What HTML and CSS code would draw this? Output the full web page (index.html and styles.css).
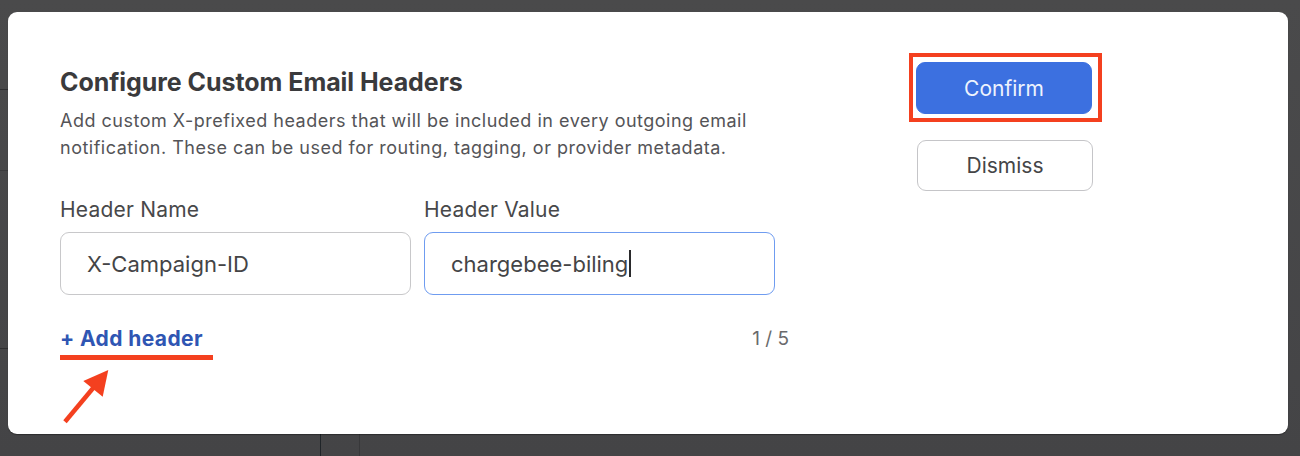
FILE: index.html
```html
<!DOCTYPE html>
<html lang="en">
<head>
<meta charset="utf-8">
<title>Configure Custom Email Headers</title>
<link rel="stylesheet" href="styles.css">
</head>
<body>
<div class="backdrop">
  <div class="bg-top">
    <div class="bg-side">
      <div class="bg-row r1"></div>
      <div class="bg-row r2"></div>
      <div class="bg-row r3"></div>
    </div>
  </div>
  <div class="bg-bottom">
    <div class="bg-cell w1"></div>
    <div class="bg-cell w2"></div>
    <div class="bg-cell w3"></div>
  </div>
</div>

<div class="modal" role="dialog" aria-labelledby="dlg-title">
  <div class="main">
    <h1 id="dlg-title" class="title">Configure Custom Email Headers</h1>
    <p class="desc">Add custom X-prefixed headers that will be included in every outgoing email notification. These can be used for routing, tagging, or provider metadata.</p>

    <div class="fields">
      <div class="field">
        <div class="label">Header Name</div>
        <div class="input">X-Campaign-ID</div>
      </div>
      <div class="field">
        <div class="label">Header Value</div>
        <div class="input focused">chargebee-biling<span class="caret"></span></div>
      </div>
    </div>

    <div class="footer">
      <div class="add-wrap">
        <a class="add-link" href="#">+ Add header</a>
        <div class="annot-underline"></div>
      </div>
      <span class="counter">1 / 5</span>
    </div>
  </div>

  <div class="actions">
    <div class="annot-box">
      <button class="btn btn-primary" type="button">Confirm</button>
    </div>
    <button class="btn btn-secondary" type="button">Dismiss</button>
  </div>

  <svg class="annot-arrow" width="60" height="66" viewBox="0 0 60 66" aria-hidden="true">
    <line x1="7" y1="59.7" x2="36" y2="25" stroke="#f4401f" stroke-width="4.5"/>
    <polygon points="50.3,8 25.3,19 44.7,34.7" fill="#f4401f"/>
  </svg>
</div>
</body>
</html>
```

FILE: styles.css
```css
* { box-sizing: border-box; }

html, body {
  margin: 0;
  padding: 0;
}

body {
  width: 1300px;
  height: 456px;
  overflow: hidden;
  background: #474748;
  font-family: "Inter", "Noto Sans", "Liberation Sans", sans-serif;
  position: relative;
}

/* backdrop page visible around the dialog */
.backdrop {
  display: flex;
  flex-direction: column;
  height: 456px;
  background: linear-gradient(#4a4a4b, #444446);
}
.bg-top {
  height: 420px;
}
.bg-side {
  width: 320px;
  display: flex;
  flex-direction: column;
}
.bg-row { border-bottom: 1px solid #2f2f31; }
.bg-row.r1 { height: 90px; }
.bg-row.r2 { height: 81px; border-bottom-color: #3b3b3d; }
.bg-row.r3 { height: 178px; }

.bg-bottom {
  flex: 1;
  display: flex;
}
.bg-cell.w1 { width: 320px; }
.bg-cell.w2 {
  width: 39px;
  border-left: 1px solid #1f2428;
}
.bg-cell.w3 {
  flex: 1;
  border-left: 1px solid #38383a;
}

/* dialog */
.modal {
  position: absolute;
  left: 8px;
  top: 12px;
  width: 1280px;
  height: 422px;
  background: #ffffff;
  border-radius: 9px;
  box-shadow: 0 1px 1px rgba(0, 0, 0, 0.35);
  display: flex;
  align-items: flex-start;
  padding: 42px 0 0 52px;
}

.main {
  width: 730px;
  margin-top: 13px;
  display: flex;
  flex-direction: column;
}

.title {
  margin: 0;
  font-size: 25px;
  line-height: 30px;
  font-weight: 700;
  color: #3a3a3c;
  letter-spacing: -0.05px;
}

.desc {
  margin: 10px 0 0;
  width: 720px;
  font-size: 18px;
  line-height: 27px;
  letter-spacing: 0.5px;
  color: #545457;
}

.fields {
  display: flex;
  gap: 13px;
  margin-top: 37px;
}
.field {
  width: 351px;
  display: flex;
  flex-direction: column;
  gap: 10px;
}
.label {
  font-size: 21px;
  line-height: 24px;
  letter-spacing: 0.2px;
  color: #48484a;
}
.input {
  height: 63px;
  border: 1px solid #c8c8ca;
  border-radius: 9px;
  padding: 0 0 0 26px;
  display: flex;
  align-items: center;
  font-size: 22px;
  color: #444446;
}
.input.focused {
  border-color: #6f9cf0;
}
.caret {
  display: inline-block;
  width: 2px;
  height: 27px;
  background: #2a2a2c;
  margin-left: 1px;
}

.footer {
  display: flex;
  justify-content: space-between;
  align-items: flex-start;
  margin-top: 32px;
}
.add-wrap {
  display: flex;
  flex-direction: column;
}
.add-link {
  font-size: 21px;
  line-height: 24px;
  font-weight: 700;
  letter-spacing: 0.4px;
  color: #2f56b3;
  text-decoration: none;
}
.annot-underline {
  width: 153px;
  height: 5px;
  background: #f4401f;
  margin-top: 4px;
}
.counter {
  font-size: 19px;
  line-height: 24px;
  color: #6a6a6c;
  margin-right: 1px;
}

/* right-hand action buttons */
.actions {
  margin-left: 119px;
  margin-top: -1px;
  display: flex;
  flex-direction: column;
  align-items: flex-start;
}
.annot-box {
  border: 4px solid #f4401f;
  padding: 5px 6px 4px 3px;
}
.btn {
  width: 176px;
  font-family: inherit;
  font-size: 21px;
  border-radius: 9px;
  cursor: pointer;
}
.btn-primary {
  height: 52px;
  background: #3c70e0;
  border: 1px solid #3c70e0;
  color: #eef3fd;
}
.btn-secondary {
  height: 51px;
  margin: 18px 0 0 8px;
  background: #ffffff;
  border: 1px solid #c5c5c8;
  color: #454547;
}

.annot-arrow {
  position: absolute;
  left: 50px;
  top: 350px;
}
```
